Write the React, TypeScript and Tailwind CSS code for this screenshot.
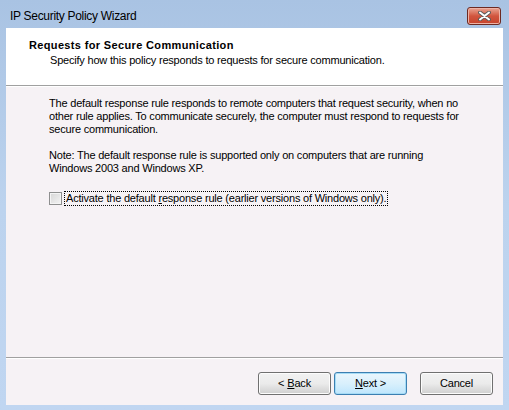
import React from "react";

const font = { fontFamily: '"Liberation Sans", Arial, sans-serif' };

function WinButton({
  children,
  primary,
}: {
  children: React.ReactNode;
  primary?: boolean;
}) {
  return (
    <button
      className={
        primary
          ? "w-[73px] h-[23px] rounded-[3px] border border-[#3c7fb1] bg-gradient-to-b from-[#eaf6fd] via-[#d9f0fc] to-[#bee6fd] shadow-[inset_0_0_0_1px_#a6dcf6] text-[11px] tracking-[-0.2px] text-black flex items-center justify-center"
          : "w-[73px] h-[23px] rounded-[3px] border border-[#707070] bg-gradient-to-b from-[#f2f2f2] via-[#ebebeb] to-[#cfcfcf] shadow-[inset_0_0_0_1px_#fcfcfc] text-[11px] tracking-[-0.2px] text-black flex items-center justify-center"
      }
    >
      {children}
    </button>
  );
}

export default function App() {
  return (
    <div
      className="w-[509px] h-[410px] flex flex-col bg-gradient-to-b from-[#a9c3e3] via-[#bcd3ee] to-[#c0d6f1] select-none"
      style={font}
    >
      {/* Title bar */}
      <div className="h-[28px] flex items-start justify-between pl-[10px] pr-[8px]">
        <span className="mt-[7px] text-[12px] tracking-[-0.3px] text-black">
          IP Security Policy Wizard
        </span>
        <div className="mt-[7px] w-[34px] h-[18px] rounded-[3px] border border-[#6d2a22] bg-gradient-to-b from-[#e8a493] via-[#d1553e] to-[#c6432d] shadow-[inset_0_0_0_1px_#eeb3a6] flex items-center justify-center">
          <svg width="13" height="10" viewBox="0 0 13 10">
            <path
              d="M2 1.5 L11 8.5 M11 1.5 L2 8.5"
              stroke="#5b5b5b"
              strokeWidth="3.8"
              strokeLinecap="round"
            />
            <path
              d="M2 1.5 L11 8.5 M11 1.5 L2 8.5"
              stroke="#ffffff"
              strokeWidth="2"
              strokeLinecap="round"
            />
          </svg>
        </div>
      </div>

      {/* Dialog body */}
      <div className="flex-1 mx-[6px] mb-[5px] flex flex-col bg-[#f6f2f5]">
        {/* Header */}
        <div className="h-[58px] bg-white pl-[23px] pt-[11px] border-b border-[#a0a0a0]">
          <div className="text-[11px] font-bold tracking-[0.35px] text-black leading-[13px]">
            Requests for Secure Communication
          </div>
          <div className="text-[11px] tracking-[-0.2px] text-black leading-[13px] mt-[2px] pl-[21px]">
            Specify how this policy responds to requests for secure
            communication.
          </div>
        </div>
        <div className="h-px bg-white" />

        {/* Content */}
        <div className="flex-1 pl-[43px] pt-[10px] text-[11px] tracking-[-0.2px] leading-[13px] text-black">
          <p>
            The default response rule responds to remote computers that
            request security, when no
            <br />
            other rule applies. To communicate securely, the computer must
            respond to requests for
            <br />
            secure communication.
          </p>
          <p className="mt-[13px]">
            Note: The default response rule is supported only on computers
            that are running
            <br />
            Windows 2003 and Windows XP.
          </p>
          <div className="mt-[16px] flex items-center">
            <div className="w-[13px] h-[13px] border border-[#8e8f8f] bg-gradient-to-br from-[#d6d6d6] to-[#f4f4f4] shadow-[inset_0_0_0_1px_#f4f4f4]" />
            <span className="ml-[2px] px-px border border-dotted border-black leading-[13px]">
              Activate the default <u>r</u>esponse rule (earlier versions of
              Windows only).
            </span>
          </div>
        </div>

        {/* Footer */}
        <div className="h-px bg-[#a0a0a0]" />
        <div className="h-[47px] border-t border-white flex items-start justify-end pt-[13px] pr-[10px]">
          <WinButton>
            &lt; <u className="ml-[3px]">B</u>ack
          </WinButton>
          <div className="w-[3px]" />
          <WinButton primary>
            <u>N</u>ext &gt;
          </WinButton>
          <div className="w-[13px]" />
          <WinButton>Cancel</WinButton>
        </div>
      </div>
    </div>
  );
}
